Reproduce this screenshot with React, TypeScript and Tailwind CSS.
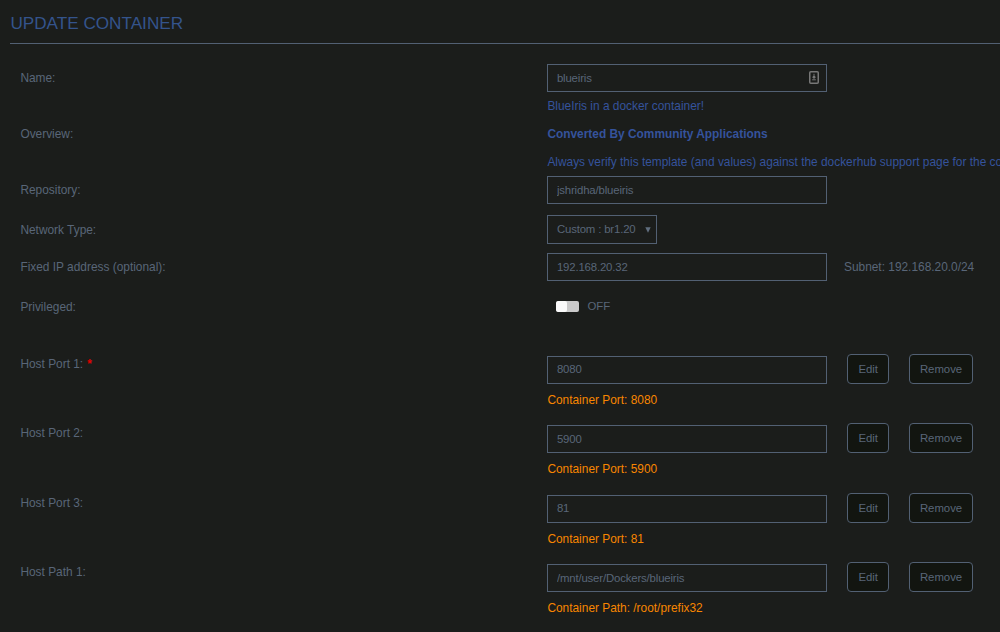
import type { ReactNode } from 'react'

const mappings = [
  { label: 'Host Port 1:', value: '8080', help: 'Container Port: 8080', required: true },
  { label: 'Host Port 2:', value: '5900', help: 'Container Port: 5900' },
  { label: 'Host Port 3:', value: '81', help: 'Container Port: 81' },
  { label: 'Host Path 1:', value: '/mnt/user/Dockers/blueiris', help: 'Container Path: /root/prefix32' },
]

function TextInput({ value }: { value: string }) {
  return (
    <input
      type="text"
      defaultValue={value}
      className="block w-[280px] h-7 shrink-0 border border-[#526073] bg-transparent px-[8.5px] pb-px text-[11.4px] tracking-[-0.16px] text-[#596678] outline-none"
    />
  )
}

function Button({ children }: { children: ReactNode }) {
  return (
    <button className="h-[30px] shrink-0 rounded-[4px] border border-[#526073] bg-[#121510] px-2.5 pt-[0.4px] text-[11.4px] tracking-[-0.03px]">
      {children}
    </button>
  )
}

function Row({ label, className, children }: { label: string; className: string; children: ReactNode }) {
  return (
    <div className={`flex items-center ${className}`}>
      <div className="w-[527px] shrink-0 pt-0.5">{label}</div>
      {children}
    </div>
  )
}

export default function App() {
  return (
    <div className="h-[632px] w-full overflow-hidden bg-[#1b1d1b] font-['Liberation_Sans',Arial,sans-serif] text-[11.9px] whitespace-nowrap text-[#596678]">
      <h1 className="ml-2.5 h-11 border-b border-[#526073] pt-[11px] pl-[0.4px] text-[17.15px] leading-6 text-[#34548c]">
        UPDATE CONTAINER
      </h1>

      <div className="pt-5 pl-[20.4px]">
        <Row label="Name:" className="h-7">
          <div className="relative">
            <TextInput value="blueiris" />
            {/* Password manager badge */}
            <svg viewBox="0 0 10 13" className="absolute top-[7px] right-2 h-[13px] w-2.5">
              <rect x="0.75" y="0.75" width="8.5" height="11.5" rx="1" fill="none" stroke="#777" strokeWidth="1.5" />
              <path d="M5 2.8v3M4 5.5h2v1.5H4zM3.2 8.8h3.6" fill="#777" stroke="#777" strokeWidth="1" />
            </svg>
          </div>
        </Row>
        <Row label="Overview:" className="h-[84px]">
          <div className="leading-7 text-[#35539c]">
            <p>BlueIris in a docker container!</p>
            <p className="font-bold">Converted By Community Applications</p>
            <p>Always verify this template (and values) against the dockerhub support page for the container</p>
          </div>
        </Row>
        <Row label="Repository:" className="h-7">
          <TextInput value="jshridha/blueiris" />
        </Row>
        <Row label="Network Type:" className="mt-[11px] h-[29px]">
          <button className="flex h-[29px] w-[110px] items-center justify-between border border-[#526073] pr-[5px] pl-[8.5px] text-[11.4px] tracking-[-0.16px]">
            Custom : br1.20
            <svg viewBox="0 0 6 6" className="h-1.5 w-1.5 fill-[#606e7f]">
              <path d="M0.3 0.3h5.4L3 5.7z" />
            </svg>
          </button>
        </Row>
        <Row label="Fixed IP address (optional):" className="mt-[9px] h-7">
          <TextInput value="192.168.20.32" />
          <span className="ml-[16.6px] pt-px">Subnet: 192.168.20.0/24</span>
        </Row>
        <Row label="Privileged:" className="mt-3 h-7">
          <div className="mb-px ml-[9px] flex h-[11px] w-[23px] overflow-hidden rounded-[2px] bg-[#cacaca]">
            <div className="w-[11px] rounded-[2px] bg-[#fafafa]" />
          </div>
          <span className="ml-2 text-[11.4px]">OFF</span>
        </Row>

        <div className="mt-[32.9px]">
          {mappings.map((item) => (
            <div key={item.label} className="flex h-[69.5px]">
              <div className="w-[527px] shrink-0 leading-5">
                {item.label}
                {item.required && <span className="ml-1 font-bold text-[#e00000]">*</span>}
              </div>
              <div>
                <div className="flex h-[30px] items-start">
                  <div className="pt-[1.7px]">
                    <TextInput value={item.value} />
                  </div>
                  <div className="ml-5 flex gap-5">
                    <Button>Edit</Button>
                    <Button>Remove</Button>
                  </div>
                </div>
                <p className="mt-1.5 leading-5 text-[#f88600]">{item.help}</p>
              </div>
            </div>
          ))}
        </div>
      </div>
    </div>
  )
}
